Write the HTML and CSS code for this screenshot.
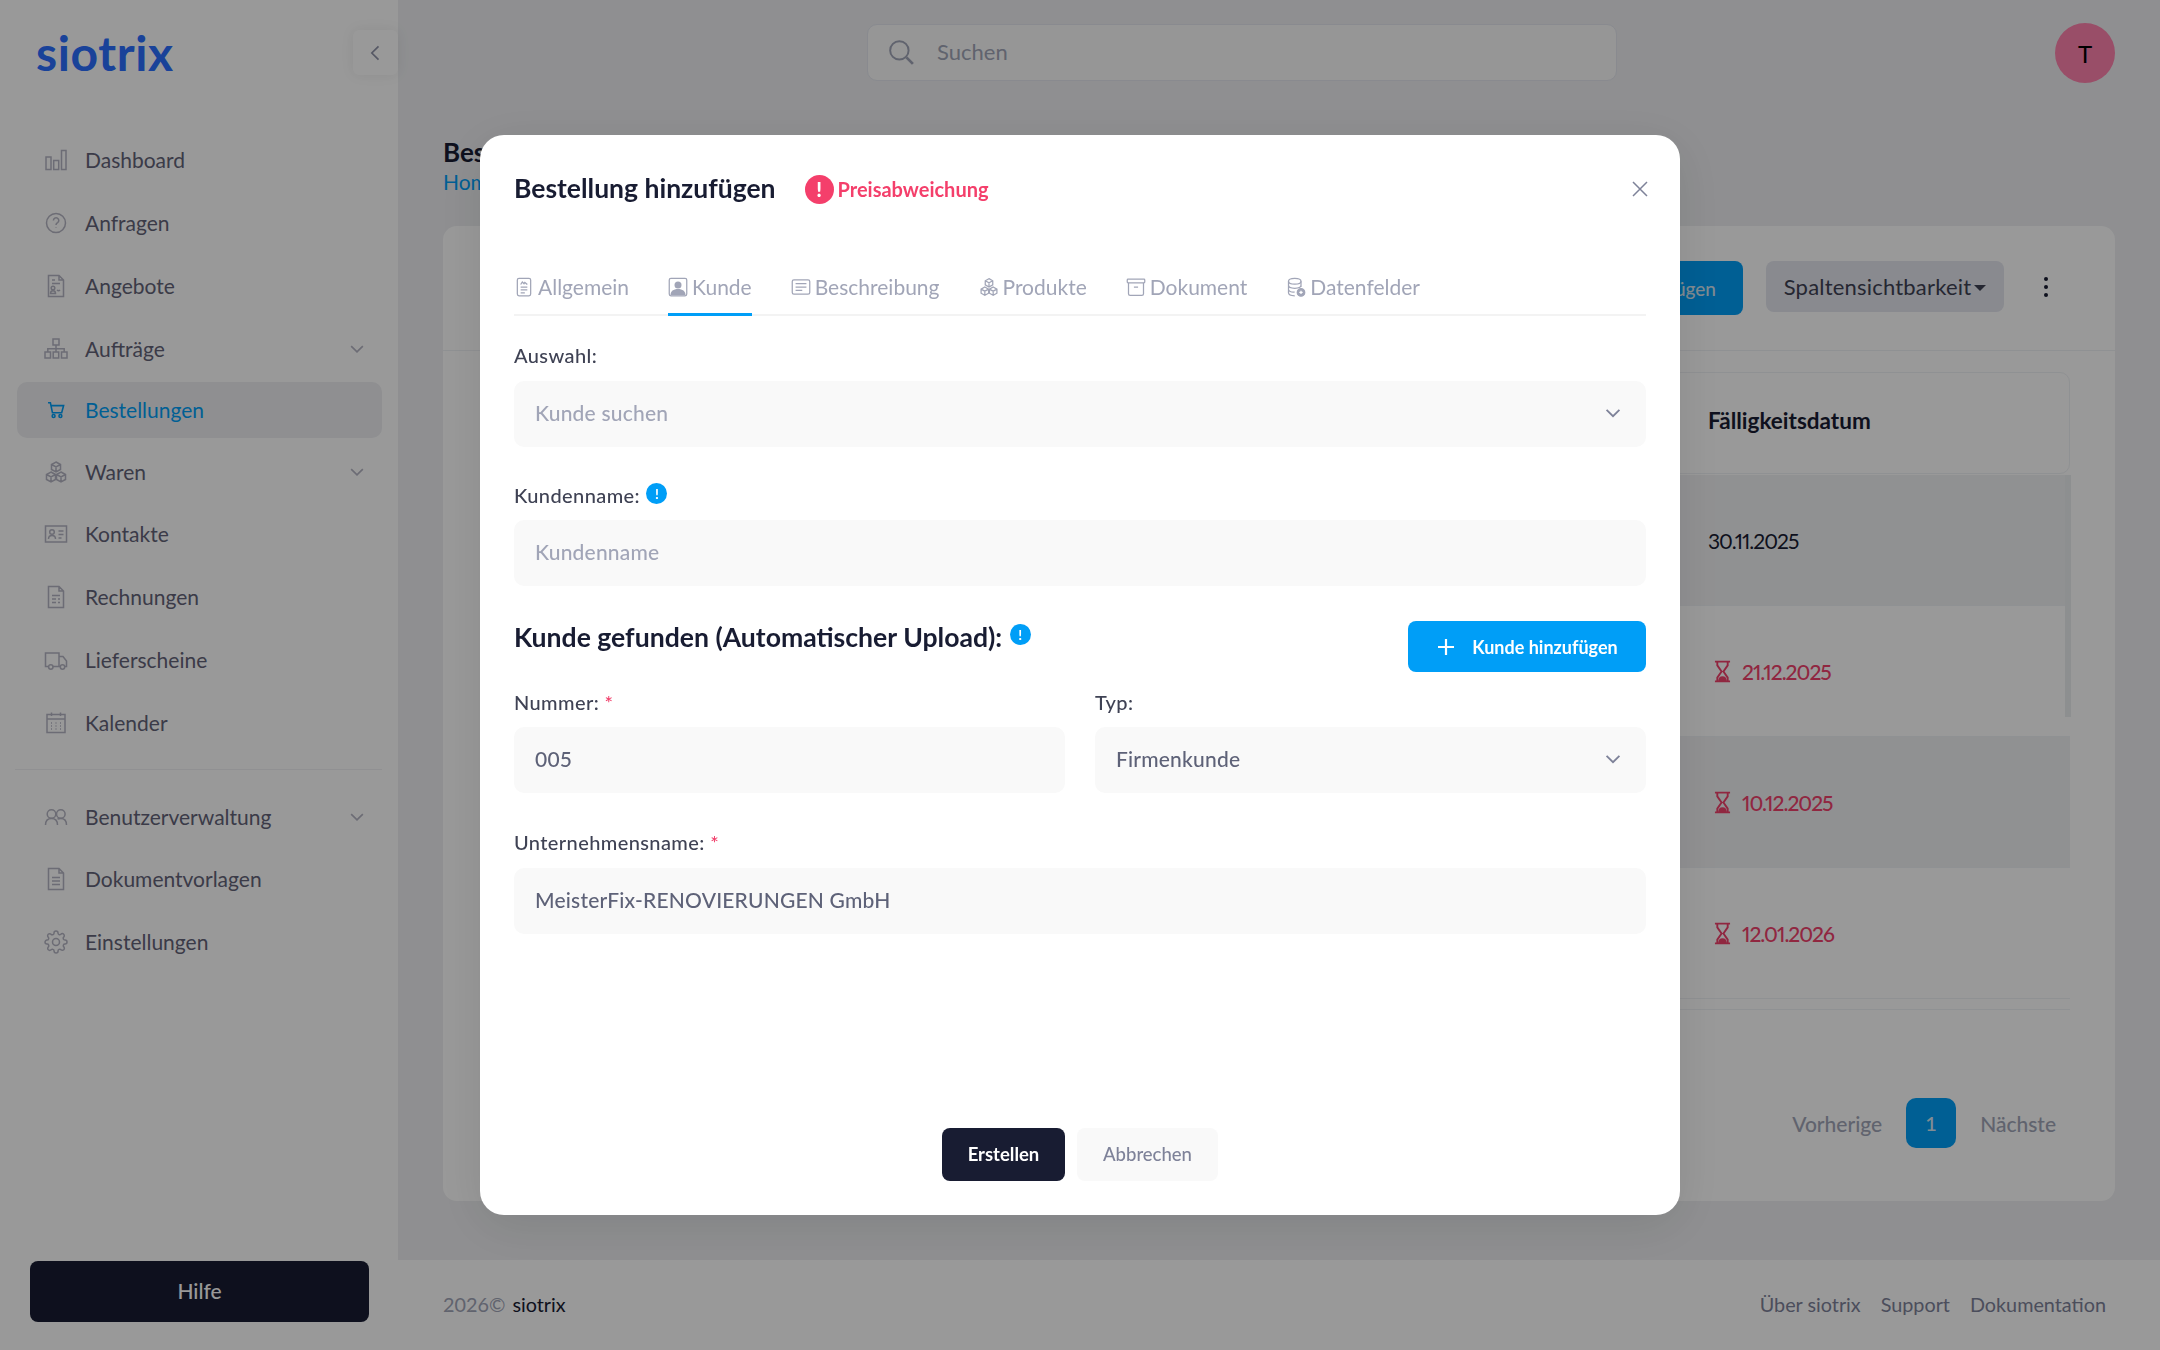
FILE: index.html
```html
<!DOCTYPE html>
<html lang="de">
<head>
    <meta charset="UTF-8">
    <meta name="viewport" content="width=device-width, initial-scale=1.0">
    <title>Bestellung hinzufügen</title>
    <link rel="stylesheet" href="styles.css">
</head>
<body>
    <!-- Icon set -->
    <svg class="icon-defs" xmlns="http://www.w3.org/2000/svg">
        <symbol id="i-chart" viewBox="0 0 24 24"><rect x="2" y="9" width="5" height="12.5"/><rect x="9.7" y="12.5" width="5" height="9"/><rect x="17.5" y="2.5" width="4.5" height="19"/></symbol>
        <symbol id="i-help" viewBox="0 0 24 24"><circle cx="12" cy="12" r="9.5"/><path d="M9.4 9.4a2.7 2.7 0 1 1 4.2 2.3c-1 .6-1.6 1.2-1.6 2.3M12 16.6v.4"/></symbol>
        <symbol id="i-doc-sign" viewBox="0 0 24 24"><path d="M4.5 1.5h10.5l4.500 4.500v16.500h-15zM15 1.500V6h4.500M8 6h3M8 9.500h8"/><circle cx="9" cy="14" r="1.800"/><path d="M6.500 19.500c0-2 1-2.700 2.500-2.700s2.500.7 2.500 2.700zM13 16c1 1 2 1 3 0"/></symbol>
        <symbol id="i-sitemap" viewBox="0 0 24 24"><rect x="9" y="2" width="6" height="6"/><rect x="1" y="15" width="5.500" height="6"/><rect x="9.200" y="15" width="5.500" height="6"/><rect x="17.500" y="15" width="5.500" height="6"/><path d="M12 8v7M3.800 15v-3.300h16.400V15"/></symbol>
        <symbol id="i-cart" viewBox="-3 -3 30 30"><path d="M2 3h3l2.600 12.500h11.500L21.500 6.500H5.700"/><circle cx="9" cy="19.500" r="1.800"/><circle cx="17.500" cy="19.500" r="1.800"/></symbol>
        <symbol id="i-boxes" viewBox="0 0 24 24"><path d="M12 2l4.500 2.500v5L12 12 7.500 9.500v-5zM7 12l4.500 2.500v5L7 22l-4.500-2.500v-5zM17 12l4.500 2.500v5L17 22l-4.500-2.500v-5zM7.500 4.500L12 7l4.500-2.500M12 7v5M2.500 14.500L7 17l4.500-2.500M7 17v5M12.500 14.500L17 17l4.500-2.500M17 17v5"/></symbol>
        <symbol id="i-card" viewBox="0 0 24 24"><rect x="1.500" y="4" width="21" height="16"/><circle cx="8" cy="10" r="2.300"/><path d="M4.500 17c0-2.500 1.500-3.500 3.500-3.500s3.500 1 3.500 3.500M14.500 9h5M14.500 12.500h5M14.500 16h3"/></symbol>
        <symbol id="i-invoice" viewBox="0 0 24 24"><path d="M4.500 1.500h10.500l4.500 4.500v16.500h-15zM15 1.500V6h4.500M8 10.500h8M8 14h4M14 14h2M8 17.500h4M14 17.500h2"/></symbol>
        <symbol id="i-truck" viewBox="0 0 24 24"><path d="M4.500 18.500H1.500V5h13.500v13.500H9M15 8.500h4l3.500 4.500v5.500h-1.500M15 18.500h1"/><circle cx="6.800" cy="19" r="2.200"/><circle cx="18.500" cy="19" r="2.200"/></symbol>
        <symbol id="i-calendar" viewBox="0 0 24 24"><rect x="3" y="3.500" width="18" height="18"/><path d="M3 8h18M7.500 1.500v3.500M16.500 1.500v3.500M7 12h1M11.500 12h1M16 12h1M7 15h1M11.500 15h1M16 15h1M7 18h1M11.500 18h1M16 18h1"/></symbol>
        <symbol id="i-users" viewBox="0 0 24 24"><circle cx="7.500" cy="9" r="4.300"/><circle cx="16.800" cy="9" r="4.300"/><path d="M1.500 20c0-4 2-6.500 6-6.500s6 2.500 6 6.500M13.500 14c1-.4 2.100-.5 3.300-.5 4 0 5.700 2.500 5.700 6.500"/></symbol>
        <symbol id="i-doc-lines" viewBox="0 0 24 24"><path d="M4.500 1.500h10.500l4.500 4.500v16.500h-15zM15 1.500V6h4.500M8 10.500h8M8 14h8M8 17.500h8"/></symbol>
        <symbol id="i-gear" viewBox="0 0 24 24"><circle cx="12" cy="12" r="3.500"/><path d="M19.400 15a1.650 1.650 0 0 0 .33 1.820l.06.06a2 2 0 0 1 0 2.830 2 2 0 0 1-2.830 0l-.06-.06a1.650 1.650 0 0 0-1.820-.33 1.650 1.650 0 0 0-1 1.510V21a2 2 0 0 1-2 2 2 2 0 0 1-2-2v-.09A1.650 1.650 0 0 0 9 19.400a1.650 1.650 0 0 0-1.820.33l-.06.06a2 2 0 0 1-2.830 0 2 2 0 0 1 0-2.830l.06-.06a1.650 1.650 0 0 0 .33-1.820 1.650 1.650 0 0 0-1.510-1H3a2 2 0 0 1-2-2 2 2 0 0 1 2-2h.09A1.650 1.650 0 0 0 4.600 9a1.650 1.650 0 0 0-.33-1.820l-.06-.06a2 2 0 0 1 0-2.830 2 2 0 0 1 2.830 0l.06.06a1.650 1.650 0 0 0 1.820.33H9a1.650 1.650 0 0 0 1-1.510V3a2 2 0 0 1 2-2 2 2 0 0 1 2 2v.09a1.650 1.650 0 0 0 1 1.510 1.650 1.650 0 0 0 1.820-.33l.06-.06a2 2 0 0 1 2.830 0 2 2 0 0 1 0 2.830l-.06.06a1.650 1.650 0 0 0-.33 1.820V9a1.650 1.650 0 0 0 1.510 1H21a2 2 0 0 1 2 2 2 2 0 0 1-2 2h-.09a1.650 1.650 0 0 0-1.510 1z"/></symbol>
        <symbol id="i-chevron" viewBox="0 0 24 24"><path d="M5 8.500l7 7 7-7"/></symbol>
        <symbol id="i-tab-general" viewBox="0 0 24 24"><rect x="4" y="1.500" width="16" height="21" rx="2"/><path d="M8 12h8M8 15.500h8M8 19h5M8 9l2-3 2 2 1-1.500 3 2.500"/></symbol>
        <symbol id="i-tab-desc" viewBox="0 0 24 24"><rect x="1.500" y="3.500" width="21" height="17" rx="2"/><path d="M5.500 8h13M5.500 12h13M5.500 16h8"/></symbol>
        <symbol id="i-tab-archive" viewBox="0 0 24 24"><rect x="1.500" y="2.500" width="21" height="4.500" rx="1"/><path d="M3 7v13a2 2 0 0 0 2 2h14a2 2 0 0 0 2-2V7M9.500 12h5"/></symbol>
        <symbol id="i-tab-data" viewBox="0 0 24 24"><ellipse cx="10.500" cy="5" rx="7.500" ry="3.500"/><path d="M3 5v14c0 2 3 3.500 7.500 3.500M18 5v7M3 10c0 2 3 3.500 7.500 3.500S18 12 18 10M3 15c0 2 3 3.500 7.500 3"/><circle cx="18" cy="18.500" r="4.500" fill="#a1a5b7"/><path d="M18 16.500v4M16 18.500h4" stroke="white"/></symbol>
    </svg>

    <div class="app">
        <!-- Sidebar -->
        <aside class="sidebar">
            <div class="brand">
                <span class="logo">siotrix</span>
                <button class="collapse-btn">
                    <svg class="collapse-icon" viewBox="0 0 24 24"><path d="M15 4l-8 8 8 8"/></svg>
                </button>
            </div>
            <nav class="side-nav">
                <a class="nav-item"><svg class="nav-icon"><use href="#i-chart"/></svg><span>Dashboard</span></a>
                <a class="nav-item"><svg class="nav-icon"><use href="#i-help"/></svg><span>Anfragen</span></a>
                <a class="nav-item"><svg class="nav-icon"><use href="#i-doc-sign"/></svg><span>Angebote</span></a>
                <a class="nav-item"><svg class="nav-icon"><use href="#i-sitemap"/></svg><span>Aufträge</span><svg class="nav-chevron"><use href="#i-chevron"/></svg></a>
                <a class="nav-item active"><svg class="nav-icon"><use href="#i-cart"/></svg><span>Bestellungen</span></a>
                <a class="nav-item"><svg class="nav-icon"><use href="#i-boxes"/></svg><span>Waren</span><svg class="nav-chevron"><use href="#i-chevron"/></svg></a>
                <a class="nav-item"><svg class="nav-icon"><use href="#i-card"/></svg><span>Kontakte</span></a>
                <a class="nav-item"><svg class="nav-icon"><use href="#i-invoice"/></svg><span>Rechnungen</span></a>
                <a class="nav-item"><svg class="nav-icon"><use href="#i-truck"/></svg><span>Lieferscheine</span></a>
                <a class="nav-item"><svg class="nav-icon"><use href="#i-calendar"/></svg><span>Kalender</span></a>
                <div class="nav-divider"></div>
                <a class="nav-item"><svg class="nav-icon"><use href="#i-users"/></svg><span>Benutzerverwaltung</span><svg class="nav-chevron"><use href="#i-chevron"/></svg></a>
                <a class="nav-item"><svg class="nav-icon"><use href="#i-doc-lines"/></svg><span>Dokumentvorlagen</span></a>
                <a class="nav-item"><svg class="nav-icon"><use href="#i-gear"/></svg><span>Einstellungen</span></a>
            </nav>
            <button class="help-btn">Hilfe</button>
        </aside>

        <div class="main">
            <!-- Top bar -->
            <header class="topbar">
                <div class="search-box">
                    <svg class="search-icon" viewBox="0 0 24 24"><circle cx="10.500" cy="10.500" r="8.500"/><path d="M17 17l6 6" stroke-width="2.500"/></svg>
                    <span>Suchen</span>
                </div>
                <div class="avatar">T</div>
            </header>

            <main class="content">
                <h2 class="page-title">Bestellungen</h2>
                <div class="breadcrumb">Home</div>

                <section class="card">
                    <div class="card-toolbar">
                        <button class="add-btn">Hinzufügen</button>
                        <button class="columns-btn">Spaltensichtbarkeit<i class="caret"></i></button>
                        <div class="more-dots"><i></i><i></i><i></i></div>
                    </div>
                    <div class="table-wrap">
                        <div class="table-head"><span>Fälligkeitsdatum</span></div>
                        <div class="table-row odd"><span class="date">30.11.2025</span></div>
                        <div class="table-row"><span class="date overdue"><svg class="hourglass" viewBox="0 0 18 24"><path d="M1 1.500h16M1 22.500h16M3.500 1.500v4L8 12l-4.500 6.500v4M14.500 1.500v4L10 12l4.500 6.500v4" fill="none"/><path d="M4.500 22c0-3 1.500-5 4.500-5s4.500 2 4.500 5z" stroke="none"/></svg>21.12.2025</span></div>
                        <div class="table-row odd"><span class="date overdue"><svg class="hourglass" viewBox="0 0 18 24"><path d="M1 1.500h16M1 22.500h16M3.500 1.500v4L8 12l-4.500 6.500v4M14.500 1.500v4L10 12l4.500 6.500v4" fill="none"/><path d="M4.500 22c0-3 1.500-5 4.500-5s4.500 2 4.500 5z" stroke="none"/></svg>10.12.2025</span></div>
                        <div class="table-row"><span class="date overdue"><svg class="hourglass" viewBox="0 0 18 24"><path d="M1 1.500h16M1 22.500h16M3.500 1.500v4L8 12l-4.500 6.500v4M14.500 1.500v4L10 12l4.500 6.500v4" fill="none"/><path d="M4.500 22c0-3 1.500-5 4.500-5s4.500 2 4.500 5z" stroke="none"/></svg>12.01.2026</span></div>
                        <div class="scroll-thumb"></div>
                    </div>
                    <div class="pagination">
                        <span>Vorherige</span>
                        <span class="page-num">1</span>
                        <span>Nächste</span>
                    </div>
                </section>
            </main>

            <footer class="page-footer">
                <div class="copy"><span>2026©</span> <b>siotrix</b></div>
                <div class="footer-links">
                    <a>Über siotrix</a>
                    <a>Support</a>
                    <a>Dokumentation</a>
                </div>
            </footer>
        </div>
    </div>

    <!-- Modal -->
    <div class="modal-overlay">
        <div class="modal">
            <div class="modal-head">
                <h3>Bestellung hinzufügen</h3>
                <span class="price-alert"><i class="alert-dot">!</i>Preisabweichung</span>
                <svg class="modal-close" viewBox="0 0 24 24"><path d="M5 5l14 14M19 5L5 19"/></svg>
            </div>

            <div class="tabs">
                <a class="tab"><svg class="tab-icon"><use href="#i-tab-general"/></svg>Allgemein</a>
                <a class="tab active">
                    <svg class="tab-icon person" viewBox="0 0 24 24"><rect x="1.500" y="1.500" width="21" height="21" rx="2" fill="none"/><circle cx="12" cy="9.500" r="4.200" stroke="none"/><path d="M3 22c0-5 3.500-7.500 9-7.500s9 2.500 9 7.500z" stroke="none"/></svg>
                    Kunde
                </a>
                <a class="tab"><svg class="tab-icon"><use href="#i-tab-desc"/></svg>Beschreibung</a>
                <a class="tab"><svg class="tab-icon"><use href="#i-boxes"/></svg>Produkte</a>
                <a class="tab"><svg class="tab-icon"><use href="#i-tab-archive"/></svg>Dokument</a>
                <a class="tab"><svg class="tab-icon"><use href="#i-tab-data"/></svg>Datenfelder</a>
            </div>

            <div class="field first">
                <label class="field-label">Auswahl:</label>
                <div class="control select placeholder">Kunde suchen<svg class="select-arrow"><use href="#i-chevron"/></svg></div>
            </div>

            <div class="field">
                <label class="field-label">Kundenname: <i class="info-dot">!</i></label>
                <div class="control placeholder">Kundenname</div>
            </div>

            <div class="found-row">
                <h4>Kunde gefunden (Automatischer Upload): <i class="info-dot">!</i></h4>
                <button class="primary-btn">
                    <svg class="plus-icon" viewBox="0 0 20 20"><path d="M10 2v16M2 10h16"/></svg>
                    Kunde hinzufügen
                </button>
            </div>

            <div class="field-grid">
                <div>
                    <label class="field-label">Nummer: <em>*</em></label>
                    <div class="control">005</div>
                </div>
                <div>
                    <label class="field-label">Typ:</label>
                    <div class="control select">Firmenkunde<svg class="select-arrow"><use href="#i-chevron"/></svg></div>
                </div>
            </div>

            <div class="field company">
                <label class="field-label">Unternehmensname: <em>*</em></label>
                <div class="control">MeisterFix-RENOVIERUNGEN GmbH</div>
            </div>

            <div class="modal-actions">
                <button class="btn-dark">Erstellen</button>
                <button class="btn-light">Abbrechen</button>
            </div>
        </div>
    </div>
</body>
</html>
```

FILE: styles.css
```css
* {
    margin: 0;
    padding: 0;
    box-sizing: border-box;
    font-family: 'Lato', 'Open Sans', sans-serif;
}

body {
    width: 2160px;
    height: 1350px;
    overflow: hidden;
    background: #eeeff2;
    color: #181c32;
}

button {
    border: none;
    cursor: pointer;
}

.icon-defs {
    display: none;
}

.app {
    display: flex;
    height: 1350px;
}

/* Sidebar */
.sidebar {
    width: 398px;
    flex-shrink: 0;
    display: flex;
    flex-direction: column;
    background: white;
    padding-bottom: 28px;
}

.brand {
    height: 129px;
    padding: 24px 0 0 36px;
    display: flex;
    justify-content: space-between;
    align-items: flex-start;
}

.logo {
    font-size: 48px;
    line-height: 58px;
    font-weight: 700;
    color: #2a6eff;
    letter-spacing: 0.6px;
}

.collapse-btn {
    width: 45px;
    height: 45px;
    margin-top: 6px;
    background: white;
    border-radius: 6px;
    box-shadow: 0 0 14px rgba(0, 0, 0, 0.07);
    display: flex;
    align-items: center;
    justify-content: center;
}

.collapse-icon {
    width: 20px;
    height: 20px;
    fill: none;
    stroke: #8f93a8;
    stroke-width: 2;
}

.side-nav {
    flex: 1;
}

.nav-item {
    height: 62.8px;
    margin: 0 16px 0 17px;
    padding: 0 15px 0 27px;
    display: flex;
    align-items: center;
    gap: 17px;
    font-size: 21px;
    color: #636378;
}

.nav-item span {
    margin-top: -1px;
}

.nav-item.active {
    height: 56px;
    margin-top: 2px;
    margin-bottom: 2px;
    border-radius: 10px;
    background: #eeeff2;
    color: #009ef7;
}

.nav-icon {
    width: 24px;
    height: 24px;
    flex-shrink: 0;
    fill: none;
    stroke: #b5b5c3;
    stroke-width: 1.500;
}

.active .nav-icon {
    stroke: #009ef7;
    stroke-width: 2;
}

.nav-chevron {
    width: 20px;
    height: 20px;
    margin-left: auto;
    fill: none;
    stroke: #b5b5c3;
    stroke-width: 2;
}

.nav-divider {
    height: 1px;
    margin: 15px 16px 15px 15px;
    background: #f1f1f4;
}

.help-btn {
    width: 339px;
    height: 61px;
    margin-left: 30px;
    padding-bottom: 2px;
    border-radius: 8px;
    background: #181c32;
    color: white;
    font-size: 21px;
    font-weight: 500;
}

/* Main column */
.main {
    flex: 1;
    display: flex;
    flex-direction: column;
    min-width: 0;
}

.topbar {
    height: 100px;
    flex-shrink: 0;
    position: relative;
    display: flex;
    justify-content: center;
}

.search-box {
    width: 750px;
    height: 57px;
    margin: 24px 0 0 -74px;
    padding: 0 0 2px 20px;
    display: flex;
    align-items: center;
    gap: 23px;
    border: 1px solid #e4e6ef;
    border-radius: 10px;
    background: #fafafa;
    font-size: 22px;
    color: #a1a5b7;
}

.search-icon {
    width: 26px;
    height: 26px;
    fill: none;
    stroke: #a1a5b7;
    stroke-width: 1.800;
}

.avatar {
    position: absolute;
    top: 23px;
    right: 45px;
    width: 60px;
    height: 60px;
    border-radius: 50%;
    background: #ff82ad;
    display: flex;
    align-items: center;
    justify-content: center;
    font-size: 24px;
    color: #000;
}

.content {
    flex: 1;
    min-height: 0;
    padding: 38px 45px 0;
}

.page-title {
    font-size: 26px;
    line-height: 28px;
    font-weight: 700;
}

.breadcrumb {
    margin-top: 3px;
    font-size: 21px;
    line-height: 26px;
    color: #009ef7;
}

.card {
    height: 975px;
    margin-top: 31px;
    background: white;
    border-radius: 14px;
    display: flex;
    flex-direction: column;
}

.card-toolbar {
    height: 125px;
    flex-shrink: 0;
    padding: 35px 0 0;
    display: flex;
    justify-content: flex-end;
    align-items: flex-start;
    border-bottom: 1px solid #eff2f5;
}

.add-btn {
    height: 54px;
    width: 300px;
    padding-right: 27px;
    text-align: right;
    border-radius: 8px;
    background: #009ef7;
    color: #d5e6f1;
    font-size: 19px;
    font-weight: 500;
}

.columns-btn {
    height: 51px;
    width: 238px;
    margin-left: 23px;
    border-radius: 8px;
    background: #e4e6ef;
    color: #3f4254;
    font-size: 22px;
    letter-spacing: 0.2px;
}

.caret {
    display: inline-block;
    margin: 0 0 4px 3px;
    border-left: 6px solid transparent;
    border-right: 6px solid transparent;
    border-top: 6px solid #3f4254;
}

.more-dots {
    width: 6px;
    margin: 16px 65px 0 40px;
    display: flex;
    flex-direction: column;
    gap: 4px;
}

.more-dots i {
    width: 4px;
    height: 4px;
    border-radius: 50%;
    background: #181c32;
}

.table-wrap {
    position: relative;
    margin: 21px 45px 0 45px;
    height: 638px;
    border-bottom: 1px solid #eff2f5;
}

.table-head {
    height: 102px;
    padding: 0 0 5px 1219px;
    display: flex;
    align-items: center;
    border: 1px solid #eff2f5;
    border-radius: 10px;
    font-size: 22.5px;
    font-weight: 700;
}

.table-row {
    height: 131px;
    padding-left: 1220px;
    display: flex;
    align-items: center;
    border-bottom: 1px solid #eff2f5;
}

.table-row.odd {
    background: #f1f2f4;
}

.table-head + .table-row {
    margin-top: 1px;
}

.date {
    display: flex;
    align-items: center;
    font-size: 21px;
    font-variant-numeric: proportional-nums;
    letter-spacing: -1px;
    color: #181c32;
}

.date.overdue {
    padding-left: 6px;
    gap: 11px;
    font-weight: 500;
    color: #f1416c;
}

.hourglass {
    width: 17px;
    height: 23px;
    fill: #f1416c;
    stroke: #f1416c;
    stroke-width: 2;
}

/* Table scrollbar, sits over the rows */
.scroll-thumb {
    position: absolute;
    top: 103px;
    right: -1px;
    width: 6px;
    height: 242px;
    background: #eceef1;
}

.pagination {
    margin: 88px 59px 0 0;
    display: flex;
    justify-content: flex-end;
    align-items: center;
    gap: 24px;
    font-size: 21px;
    font-weight: 500;
    color: #a1a5b7;
}

.page-num {
    width: 50px;
    height: 50px;
    border-radius: 10px;
    background: #009ef7;
    color: #d6e9f5;
    display: flex;
    align-items: center;
    justify-content: center;
    font-size: 20px;
}

.page-footer {
    height: 90px;
    flex-shrink: 0;
    padding: 0 54px 3px 45px;
    background: white;
    display: flex;
    justify-content: space-between;
    align-items: center;
    font-size: 19.8px;
    color: #a1a5b7;
}

.copy b {
    margin-left: 2px;
    font-weight: 400;
    color: #181c32;
}

.footer-links {
    display: flex;
    gap: 20px;
    color: #7e8299;
}

/* Modal */
.modal-overlay {
    position: fixed;
    top: 0;
    left: 0;
    width: 100%;
    height: 100%;
    background: rgba(0, 0, 0, 0.4);
}

.modal {
    width: 1200px;
    height: 1080px;
    margin: 135px 0 0 480px;
    padding: 0 34px;
    background: white;
    border-radius: 24px;
    box-shadow: 0 10px 50px rgba(0, 0, 0, 0.1);
    display: flex;
    flex-direction: column;
}

.modal-head {
    height: 108px;
    flex-shrink: 0;
    display: flex;
    align-items: center;
}

.modal-head h3 {
    padding-bottom: 2px;
    font-size: 26.5px;
    font-weight: 700;
    color: #181c32;
}

.price-alert {
    margin-left: 29px;
    display: flex;
    align-items: center;
    gap: 4px;
    font-size: 20px;
    font-weight: 700;
    color: #f43f6b;
}

.alert-dot {
    width: 29px;
    height: 29px;
    border-radius: 50%;
    background: #f43f6b;
    color: white;
    font-size: 20px;
    font-style: normal;
    font-weight: 900;
    text-align: center;
    line-height: 29px;
}

.modal-close {
    width: 24px;
    height: 24px;
    margin-left: auto;
    margin-right: -6px;
    fill: none;
    stroke: #7e8299;
    stroke-width: 1.500;
}

.tabs {
    height: 56px;
    flex-shrink: 0;
    margin-top: 17px;
    display: flex;
    gap: 39px;
    border-bottom: 2px solid #f3f3f3;
}

.tab {
    height: 56px;
    display: flex;
    align-items: center;
    gap: 4px;
    border-bottom: 3px solid transparent;
    font-size: 21px;
    color: #a1a5b7;
    white-space: nowrap;
}

.tab.active {
    border-bottom-color: #009ef7;
}

.tab-icon {
    width: 20px;
    height: 22px;
    fill: none;
    stroke: #a1a5b7;
    stroke-width: 1.500;
}

.tab-icon.person {
    fill: #a1a5b7;
}

.field {
    margin-top: 36px;
}

.field.first {
    margin-top: 27px;
}

.field.first .field-label {
    margin-bottom: 14px;
}

.field.company {
    margin-top: 37px;
}

.field.company .field-label {
    margin-bottom: 14px;
}

.field-label {
    display: block;
    height: 24px;
    margin-bottom: 13px;
    font-size: 20px;
    line-height: 24px;
    font-weight: 500;
    letter-spacing: 0.4px;
    color: #3f4254;
}

.field-label em {
    font-style: normal;
    color: #f1416c;
}

.info-dot {
    display: inline-block;
    width: 21px;
    height: 21px;
    margin-left: 1px;
    border-radius: 50%;
    background: #009ef7;
    color: white;
    font-size: 14px;
    font-style: normal;
    font-weight: 700;
    line-height: 21px;
    letter-spacing: 0;
    text-align: center;
    vertical-align: 4px;
}

.control {
    height: 66px;
    padding: 0 21px 3px;
    display: flex;
    align-items: center;
    background: #f9f9f9;
    border-radius: 10px;
    font-size: 21px;
    font-weight: 500;
    letter-spacing: 0.2px;
    color: #5e6278;
}

.control.placeholder {
    color: #a1a5b7;
}

.select-arrow {
    width: 22px;
    height: 22px;
    margin-left: auto;
    margin-right: 1px;
    fill: none;
    stroke: #7e8299;
    stroke-width: 2;
}

.found-row {
    margin-top: 35px;
    display: flex;
    justify-content: space-between;
    align-items: flex-start;
}

.found-row h4 {
    font-size: 26.6px;
    font-weight: 700;
    color: #181c32;
}

.found-row .info-dot {
    vertical-align: 7px;
}

.primary-btn {
    width: 238px;
    height: 51px;
    display: flex;
    align-items: center;
    justify-content: center;
    gap: 16px;
    border-radius: 8px;
    background: #009ef7;
    color: white;
    font-size: 18px;
    font-weight: 700;
}

.plus-icon {
    width: 20px;
    height: 20px;
    fill: none;
    stroke: white;
    stroke-width: 2.200;
}

.field-grid {
    margin-top: 18px;
    display: grid;
    grid-template-columns: 551px 1fr;
    gap: 30px;
}

.modal-actions {
    margin-top: auto;
    padding-bottom: 34px;
    display: flex;
    justify-content: center;
    gap: 12px;
}

.modal-actions button {
    height: 53px;
    padding-bottom: 2px;
    border-radius: 8px;
    font-size: 18.5px;
}

.btn-dark {
    width: 123px;
    background: #181c32;
    color: white;
    font-weight: 700;
}

.btn-light {
    width: 141px;
    background: #f9f9f9;
    color: #7e8299;
    font-weight: 500;
}
```
